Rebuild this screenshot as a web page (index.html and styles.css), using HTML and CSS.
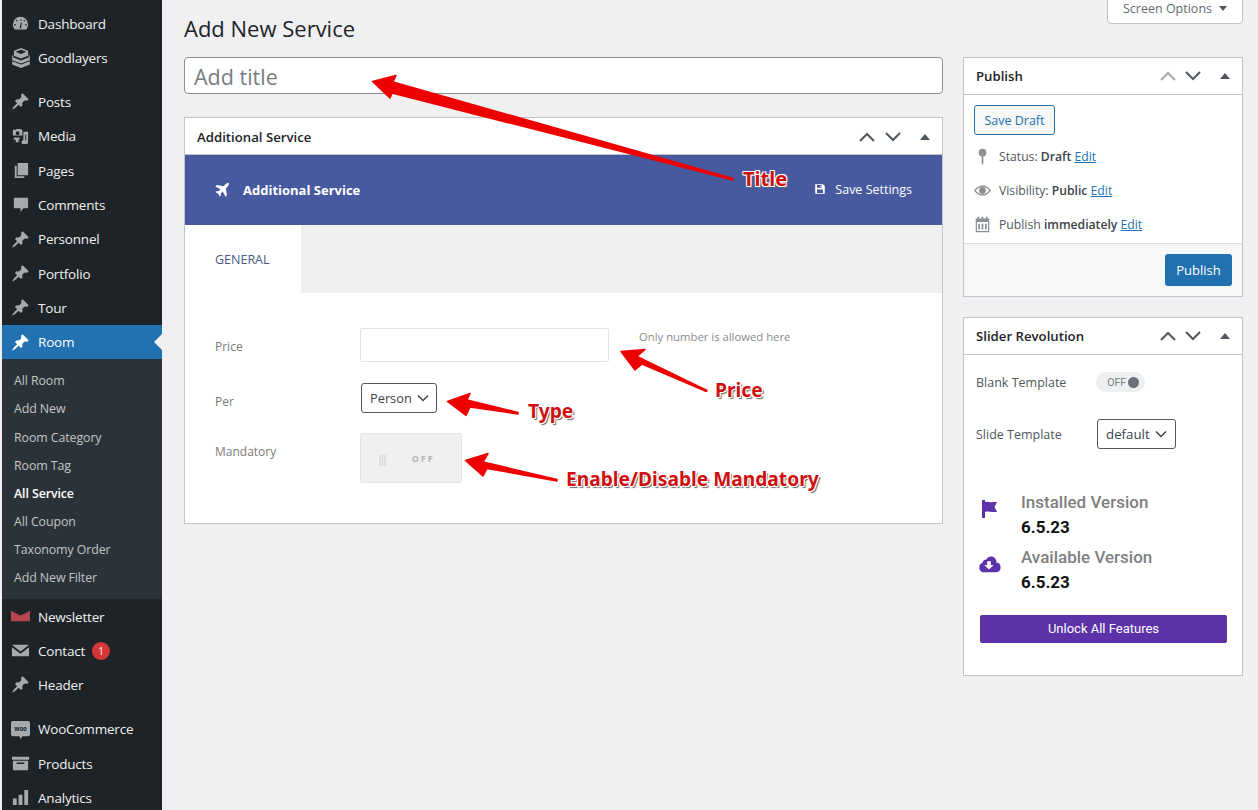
FILE: index.html
```html
<!DOCTYPE html>
<html lang="en">
<head>
    <meta charset="UTF-8">
    <title>Add New Service</title>
    <link rel="stylesheet" href="styles.css">
</head>
<body>
    <div id="geral">
        <nav class="sidebar">
            <ul class="menu menu-first">
                <li><svg class="mi" viewBox="0 0 20 20"><path d="M10 3a8 8 0 0 0-8 8c0 2 .7 3.8 2 5.2h12c1.3-1.400 2-3.200 2-5.200a8 8 0 0 0-8-8zm-5 9H3.500v-1.500H5zm1-4L5 7l1-1 1 1zm4-2.500h1V7h-1zM9 15l1.500-6 1 .2L10.500 15zm6-3v-1.500h1.500V12zm-1-4l-1-1 1-1 1 1z"/></svg>Dashboard</li>
                <li><svg class="mi big" viewBox="0 0 20 20"><path d="M10 1l6.500 2.500V8L10 10.500 3.500 8V3.500zM5 4.300l5 2 5-2-5-1.800zM2 7.500l1 .5v1.500l7 2.700 7-2.700V8l1-.5V12l-8 3-8-3zM2 13l8 3 8-3v3l-8 3-8-3z"/></svg>Goodlayers</li>
            </ul>
            <ul class="menu">
                <li><svg class="mi" viewBox="0 0 20 20"><use href="#pin"/></svg>Posts</li>
                <li><svg class="mi" viewBox="0 0 20 20"><path d="M2 3h3l1-1h4l1 1h1v6H2zm5 1.500a2 2 0 1 0 0 4 2 2 0 0 0 0-4zM13 5h5v11a2 2 0 1 1-2-2V8h-1v8a2 2 0 0 1-4 0 2 2 0 0 1 2-2zM3 11h6v2.500H8V16H5v-2.500H3z"/></svg>Media</li>
                <li><svg class="mi" viewBox="0 0 20 20"><path d="M7 2h11v13H7zM4 5h2v11h8v2H4z"/></svg>Pages</li>
                <li><svg class="mi" viewBox="0 0 20 20"><path d="M4 3h13a1 1 0 0 1 1 1v9a1 1 0 0 1-1 1h-4l-3 4v-4H4a1 1 0 0 1-1-1V4a1 1 0 0 1 1-1z"/></svg>Comments</li>
                <li><svg class="mi" viewBox="0 0 20 20"><use href="#pin"/></svg>Personnel</li>
                <li><svg class="mi" viewBox="0 0 20 20"><use href="#pin"/></svg>Portfolio</li>
                <li><svg class="mi" viewBox="0 0 20 20"><use href="#pin"/></svg>Tour</li>
                <li class="current"><svg class="mi" viewBox="0 0 20 20"><use href="#pin"/></svg>Room</li>
            </ul>
            <ul class="submenu">
                <li>All Room</li>
                <li>Add New</li>
                <li>Room Category</li>
                <li>Room Tag</li>
                <li class="sub-current">All Service</li>
                <li>All Coupon</li>
                <li>Taxonomy Order</li>
                <li>Add New Filter</li>
            </ul>
            <ul class="menu">
                <li><svg class="mi" viewBox="0 0 20 20"><path class="red" d="M0 4l10 5 10-5v11H0z"/></svg>Newsletter</li>
                <li><svg class="mi" viewBox="0 0 20 20"><path d="M1 4h18L10 11zM1 6.500l9 7 9-7V16H1z"/></svg>Contact<span class="badge">1</span></li>
                <li><svg class="mi" viewBox="0 0 20 20"><use href="#pin"/></svg>Header</li>
            </ul>
            <ul class="menu menu-sep">
                <li><svg class="mi" viewBox="0 0 20 20"><path d="M2 1h16a2 2 0 0 1 2 2v12a2 2 0 0 1-2 2h-6l-2 3-1-3H2a2 2 0 0 1-2-2V3a2 2 0 0 1 2-2z"/><text class="woo" x="10" y="11.500" text-anchor="middle">woo</text></svg>WooCommerce</li>
                <li><svg class="mi" viewBox="0 0 20 20"><path d="M1 3h18v3H1zM2 7h16v10H2zm4 2v1.500h8V9z"/></svg>Products</li>
                <li><svg class="mi" viewBox="0 0 20 20"><path d="M2 11h4v7H2zM8 7h4v11H8zM14 2h4v16h-4z"/></svg>Analytics</li>
            </ul>
        </nav>

        <main class="conteudo">
            <div class="screen-options">Screen Options<i class="seta"></i></div>
            <h1>Add New Service</h1>
            <div class="colunas">
                <div class="principal">
                    <div class="titulo">Add title</div>

                    <section class="box">
                        <header class="box-top">
                            <h2>Additional Service</h2>
                            <div class="box-ctrl">
                                <svg viewBox="0 0 20 20"><path d="M3 14l7-7 7 7"/></svg>
                                <svg viewBox="0 0 20 20"><path d="M3 6l7 7 7-7"/></svg>
                                <i class="tri"></i>
                            </div>
                        </header>
                        <div class="banner">
                            <div class="banner-nome">
                                <svg viewBox="0 0 20 20"><path transform="rotate(45 10 10)" d="M10 0c1.500 0 2 2 2 4v3l7 5v2.500l-7-2V16l2 2v1.500l-4-1-4 1V18l2-2v-3.500l-7 2V12l7-5V4c0-2 .5-4 2-4z"/></svg>
                                Additional Service
                            </div>
                            <div class="banner-salvar">
                                <svg viewBox="0 0 20 20"><path d="M2 2h13l3 3v13H2zm3 1.500V8h8V3.500zm6 .7h1.500v3H11zM5 11v5.500h10V11z"/></svg>
                                Save Settings
                            </div>
                        </div>
                        <div class="abas">
                            <div class="aba">GENERAL</div>
                        </div>
                        <div class="campos">
                            <div class="linha linha-preco">
                                <label>Price</label>
                                <div class="campo-texto"></div>
                                <span class="dica">Only number is allowed here</span>
                            </div>
                            <div class="linha linha-per">
                                <label>Per</label>
                                <div class="selecao">Person <svg viewBox="0 0 12 8"><path d="M1 1.500l5 5 5-5"/></svg></div>
                            </div>
                            <div class="linha linha-mand">
                                <label>Mandatory</label>
                                <div class="chave"><span class="barras">|||</span><span>OFF</span></div>
                            </div>
                        </div>
                    </section>
                </div>

                <aside class="lateral">
                    <section class="box">
                        <header class="box-top box-top-lat">
                            <h2>Publish</h2>
                            <div class="box-ctrl">
                                <svg class="fraco" viewBox="0 0 20 20"><path d="M3 14l7-7 7 7"/></svg>
                                <svg viewBox="0 0 20 20"><path d="M3 6l7 7 7-7"/></svg>
                                <i class="tri"></i>
                            </div>
                        </header>
                        <div class="pub-corpo">
                            <div class="btn-rascunho">Save Draft</div>
                            <div class="pub-linha">
                                <svg viewBox="0 0 20 20"><path d="M10 1a4.500 4.500 0 0 0-1 8.900V18l1 2 1-2V9.900A4.500 4.500 0 0 0 10 1z"/></svg>
                                <span>Status: <b>Draft</b> <a>Edit</a></span>
                            </div>
                            <div class="pub-linha">
                                <svg viewBox="0 0 20 20"><path d="M10 4c4.500 0 8 3 10 6-2 3-5.500 6-10 6S2 13 0 10c2-3 5.500-6 10-6zm0 1.500C7 5.500 4 7.500 2 10c2 2.500 5 4.500 8 4.500s6-2 8-4.500c-2-2.500-5-4.500-8-4.500zM10 6a4 4 0 1 1 0 8 4 4 0 0 1 0-8z"/></svg>
                                <span>Visibility: <b>Public</b> <a>Edit</a></span>
                            </div>
                            <div class="pub-linha">
                                <svg viewBox="0 0 20 20"><path d="M4 1h2v2h3V1h2v2h3V1h2v2h2v16H2V3h2zM3.500 7v10.500h13V7zM5 9h2v7H5zm4 0h2v7H9zm4 0h2v7h-2z"/></svg>
                                <span>Publish <b>immediately</b> <a>Edit</a></span>
                            </div>
                        </div>
                        <div class="pub-rodape"><div class="btn-publicar">Publish</div></div>
                    </section>

                    <section class="box box-slider">
                        <header class="box-top box-top-lat">
                            <h2>Slider Revolution</h2>
                            <div class="box-ctrl">
                                <svg viewBox="0 0 20 20"><path d="M3 14l7-7 7 7"/></svg>
                                <svg viewBox="0 0 20 20"><path d="M3 6l7 7 7-7"/></svg>
                                <i class="tri"></i>
                            </div>
                        </header>
                        <div class="sr-corpo">
                            <div class="sr-linha sr-blank">
                                <span class="sr-rotulo">Blank Template</span>
                                <div class="sr-toggle">OFF<i></i></div>
                            </div>
                            <div class="sr-linha sr-slide">
                                <span class="sr-rotulo">Slide Template</span>
                                <div class="selecao sr-select">default <svg viewBox="0 0 12 8"><path d="M1 1.500l5 5 5-5"/></svg></div>
                            </div>
                            <div class="versao versao-primeira">
                                <svg class="flag" viewBox="0 0 20 20"><path d="M3 1h3v2c3-1 5 1 8 0h4l-2.500 5 2.500 5h-5c-2 0-4-1-7 0v6H3z"/></svg>
                                <div><p class="v-nome">Installed Version</p><p class="v-num">6.5.23</p></div>
                            </div>
                            <div class="versao">
                                <svg class="nuvem" viewBox="0 0 26 20"><path d="M21 8.500A5.500 5.500 0 0 0 15.500 2a6 6 0 0 0-5.500 3.300A3.500 3.500 0 0 0 6 8.700 5.500 5.500 0 0 0 6 19h15a5.300 5.300 0 0 0 0-10.500zM13 16l-5-5h3V7h4v4h3z"/></svg>
                                <div><p class="v-nome">Available Version</p><p class="v-num">6.5.23</p></div>
                            </div>
                            <div class="btn-unlock">Unlock All Features</div>
                        </div>
                    </section>
                </aside>
            </div>
        </main>
    </div>

    <!-- setas vermelhas por cima do print -->
    <svg class="setas" width="1258" height="810" viewBox="0 0 1258 810">
        <defs>
            <path id="pin" d="M10.440 3.020l1.820-1.820 6.360 6.350-1.830 1.820c-1.050-.68-2.480-.57-3.410.36l-.75.75c-.92.93-1.040 2.350-.35 3.400l-1.830 1.820-2.410-2.410-2.800 2.790c-.42.42-3.380 2.710-3.800 2.290s1.860-3.390 2.280-3.810l2.790-2.790L4.100 9.360l1.830-1.820c1.050.69 2.480.57 3.400-.36l.75-.75c.93-.92 1.050-2.350.37-3.410z"/>
        </defs>
        <g class="seta-verm">
            <path d="M372.500 81.500L396 75.500L393 82L733 178.500L733 180L392 93L390 98Z"/>
            <path d="M621 351.500L645 349.500L637 356.500L707 390.500L706.500 391.500L642 364L635 370Z"/>
            <path d="M447.500 401.500L470 393.500L467 400L518 412.500L518 414L470 407L466 415.500Z"/>
            <path d="M465.500 460.500L488 453.500L483 462L557 479.500L557 481L487 468.500L483 476Z"/>
        </g>
    </svg>
    <span class="nota nota-titulo">Title</span>
    <span class="nota nota-preco">Price</span>
    <span class="nota nota-tipo">Type</span>
    <span class="nota nota-mand">Enable/Disable Mandatory</span>
</body>
</html>
```

FILE: styles.css
```css
/* base */
body {
    margin: 0;
    background-color: #f0f0f3;
    font-family: "Open Sans", "Noto Sans", sans-serif;
    font-size: 13px;
    color: #3c434a;
    height: 810px;
    overflow: hidden;
    position: relative;
}

h1, h2, p, ul {
    margin: 0;
    padding: 0;
}

#geral {
    display: flex;
    height: 810px;
    padding-left: 2px;
}

/* menu lateral */
.sidebar {
    width: 160px;
    flex: none;
    background-color: #1d2327;
    color: #f0f0f1;
    padding-top: 6.400px;
}

.menu {
    list-style-type: none;
    margin-bottom: 10px;
}

.menu li {
    height: 34.3px;
    display: flex;
    align-items: center;
    padding-left: 36px;
    position: relative;
    font-size: 13.500px;
    letter-spacing: -0.2px;
}

.mi {
    position: absolute;
    left: 9px;
    top: 7.500px;
    width: 19px;
    height: 19px;
    fill: #a7aaad;
}

.mi.big {
    left: 8px;
    top: 6px;
    width: 22px;
    height: 22px;
}

.mi .red {
    fill: #b5444f;
}

.woo {
    font-size: 6.500px;
    font-weight: 700;
    fill: #1d2327;
}

.menu li.current {
    background-color: #2271b1;
    color: #fff;
}

.current .mi {
    fill: #fff;
}

.current::after {
    content: "";
    position: absolute;
    right: 0;
    top: 9px;
    border: 8px solid transparent;
    border-right-color: #f0f0f3;
    border-left-width: 0;
}

.menu:has(.current) {
    margin-bottom: 0;
}

.submenu {
    list-style-type: none;
    background-color: #2c3338;
    padding: 8px 0 7px;
    color: #c3c4c7;
    font-size: 12.400px;
    letter-spacing: -0.1px;
}

.submenu li {
    height: 28.140px;
    line-height: 28px;
    padding-left: 12px;
}

.submenu .sub-current {
    color: #fff;
    font-weight: 600;
}

.badge {
    display: inline-block;
    width: 18px;
    height: 18px;
    line-height: 18px;
    border-radius: 50%;
    background-color: #d63638;
    color: #fff;
    text-align: center;
    font-size: 10px;
    margin-left: 7px;
    letter-spacing: 0;
}

/* conteudo */
.conteudo {
    flex: 1;
    padding: 0 15px 0 22px;
    position: relative;
}

.screen-options {
    position: absolute;
    top: -1px;
    right: 15px;
    width: 134px;
    height: 23px;
    line-height: 18px;
    text-align: center;
    background-color: #fff;
    border: 1px solid #c3c4c7;
    border-radius: 0 0 4px 4px;
    color: #646970;
    font-size: 12.500px;
}

.seta {
    display: inline-block;
    width: 0;
    height: 0;
    margin-left: 7px;
    border: 4px solid transparent;
    border-bottom-width: 0;
    border-top: 5px solid #50575e;
    vertical-align: 2px;
}

h1 {
    font-size: 22px;
    font-weight: 400;
    line-height: 30px;
    color: #1d2327;
    padding-top: 13px;
    margin-bottom: 14px;
}

.colunas {
    display: flex;
    gap: 20px;
    align-items: flex-start;
}

.principal {
    width: 759px;
    flex: none;
}

.lateral {
    width: 280px;
    flex: none;
}

.titulo {
    height: 35px;
    line-height: 38px;
    padding: 0 9px;
    background-color: #fff;
    border: 1px solid #8c8f94;
    border-radius: 4px;
    font-size: 21.500px;
    color: #787c82;
    margin-bottom: 23px;
}

.box {
    background-color: #fff;
    border: 1px solid #c3c4c7;
}

.box-top {
    height: 36px;
    display: flex;
    align-items: center;
    justify-content: space-between;
    border-bottom: 1px solid #c3c4c7;
    padding: 0 12px;
}

.principal .box-top {
    height: 35px;
    padding-top: 1px;
}

.box-top h2 {
    font-size: 13.200px;
    font-weight: 600;
    color: #1d2327;
}

.box-ctrl {
    display: flex;
    align-items: center;
    gap: 5px;
}

.principal .box-ctrl {
    gap: 6px;
}

.box-ctrl svg {
    width: 20px;
    height: 20px;
    fill: none;
    stroke: #50575e;
    stroke-width: 2;
}

.box-ctrl svg.fraco {
    stroke: #a7aaad;
}

.tri {
    width: 0;
    height: 0;
    margin-left: 12px;
    border: 5px solid transparent;
    border-top-width: 0;
    border-bottom: 6px solid #50575e;
}

.principal .tri {
    margin-left: 11px;
}

/* banner azul */
.banner {
    height: 70px;
    background-color: #485a9f;
    color: #fff;
    display: flex;
    align-items: center;
    justify-content: space-between;
    padding: 0 30px;
}

.banner-nome {
    display: flex;
    align-items: center;
    gap: 12px;
    font-weight: 700;
    font-size: 13px;
}

.banner-nome svg {
    width: 16px;
    height: 16px;
    fill: #fff;
    margin-top: -3px;
}

.banner-salvar {
    display: flex;
    align-items: center;
    gap: 9px;
    font-size: 12.500px;
    margin-top: -2px;
}

.banner-salvar svg {
    width: 12px;
    height: 12px;
    fill: #fff;
}

.abas {
    height: 68px;
    background-color: #f0f0f1;
}

.aba {
    width: 86px;
    height: 68px;
    background-color: #fff;
    line-height: 70px;
    padding-left: 30px;
    color: #485a84;
    font-size: 12.500px;
    font-weight: 500;
}

.campos {
    padding: 35px 30px 40px;
}

.linha {
    display: flex;
    align-items: center;
    color: #7a7a7a;
    font-size: 12px;
}

.linha label {
    width: 145px;
    flex: none;
}

.linha-preco {
    height: 34px;
    margin-bottom: 21px;
}

.linha-preco label {
    padding-top: 2px;
}

.linha-per {
    height: 30px;
    margin-bottom: 20px;
}

.linha-per label {
    padding-top: 6px;
}

.linha-mand {
    align-items: flex-start;
}

.linha-mand label {
    padding-top: 10px;
}

.campo-texto {
    width: 247px;
    height: 32px;
    border: 1px solid #e3e3e3;
    border-radius: 2px;
}

.dica {
    font-size: 11.300px;
    color: #8a8a8a;
    margin-left: 30px;
    padding-top: 1px;
    align-self: flex-start;
}

.selecao {
    display: inline-flex;
    align-items: center;
    gap: 5px;
    height: 28px;
    padding: 0 7px 0 8px;
    margin-left: 1px;
    border: 1px solid #50575e;
    border-radius: 3px;
    font-size: 12.800px;
    color: #3c434a;
    background-color: #fff;
}

.selecao svg {
    width: 12px;
    height: 8px;
    fill: none;
    stroke: #3c434a;
    stroke-width: 1.500;
}

.chave {
    width: 100px;
    height: 48px;
    background-color: #f0f0f0;
    border: 1px solid #e4e4e4;
    border-radius: 2px;
    display: flex;
    align-items: center;
    color: #b5b5b5;
    font-size: 9px;
    font-weight: 700;
    letter-spacing: 2px;
}

.barras {
    font-weight: 400;
    font-size: 11px;
    margin: 0 27px 0 16px;
    letter-spacing: -3.500px;
    color: #c8c8c8;
}

/* publish */
.pub-corpo {
    padding: 10px 10px 2px;
}

.btn-rascunho {
    width: 79px;
    height: 28px;
    line-height: 29px;
    text-align: center;
    border: 1px solid #2271b1;
    border-radius: 3px;
    background-color: #f6f7f7;
    color: #2271b1;
    font-size: 12.500px;
    margin-bottom: 4px;
}

.pub-linha {
    display: flex;
    align-items: center;
    gap: 8px;
    height: 34px;
    font-size: 12.200px;
    color: #50575e;
}

.pub-linha svg {
    width: 17px;
    height: 17px;
    fill: #8c8f94;
    flex: none;
}

.pub-linha b {
    font-weight: 600;
    color: #3c434a;
}

.pub-linha a {
    color: #2271b1;
    text-decoration: underline;
}

.pub-rodape {
    background-color: #f6f7f7;
    border-top: 1px solid #dcdcde;
    padding: 10px;
    display: flex;
    justify-content: flex-end;
}

.btn-publicar {
    width: 67px;
    height: 32px;
    line-height: 32px;
    text-align: center;
    background-color: #2271b1;
    border-radius: 3px;
    color: #fff;
    font-size: 13px;
}

/* slider revolution */
.box-slider {
    margin-top: 20px;
}

.sr-corpo {
    padding: 0 15px 0 12px;
    height: 320px;
    font-family: Roboto, sans-serif;
}

.sr-linha {
    display: flex;
    align-items: center;
}

.sr-rotulo {
    width: 120px;
    font-family: "Open Sans", sans-serif;
    font-size: 12.500px;
    color: #50575e;
}

.sr-blank {
    height: 20px;
    padding-top: 17px;
}

.sr-toggle {
    width: 49px;
    height: 20px;
    border-radius: 10px;
    background-color: #eeeff1;
    display: flex;
    align-items: center;
    justify-content: flex-end;
    gap: 2px;
    padding-right: 6px;
    box-sizing: border-box;
    font-size: 10.500px;
    color: #7a7f85;
}

.sr-toggle i {
    width: 11px;
    height: 11px;
    border-radius: 50%;
    background-color: #6c7177;
}

.sr-slide {
    margin-top: 27px;
}

.sr-select {
    height: 28px;
    padding: 0 8px 0 8px;
    font-size: 13.300px;
    font-family: "Open Sans", sans-serif;
}

.versao {
    display: flex;
    align-items: flex-start;
    height: 55px;
}

.versao-primeira {
    margin-top: 41px;
}

.versao svg {
    width: 24px;
    height: 20px;
    fill: #5b32a8;
    margin: 9px 20px 0 1px;
    flex: none;
}

.v-nome {
    font-size: 17px;
    font-weight: 500;
    color: #7f7f7f;
    line-height: 25px;
}

.v-num {
    font-size: 17px;
    font-weight: 700;
    color: #111;
    line-height: 25px;
}

.btn-unlock {
    margin: 15px 0 0 4px;
    width: 247px;
    height: 28px;
    line-height: 28px;
    text-align: center;
    background-color: #5b32a8;
    color: #fff;
    border-radius: 2px;
    font-size: 13px;
    font-weight: 400;
}

/* anotacoes */
.setas {
    position: absolute;
    left: 0;
    top: 0;
}

.seta-verm path {
    fill: #ee0000;
    stroke: #ee0000;
    stroke-width: 1.500;
    stroke-linejoin: round;
}

.nota {
    position: absolute;
    font-family: "Noto Sans", sans-serif;
    font-weight: 700;
    font-size: 19.200px;
    line-height: 24px;
    color: #cf1010;
    text-shadow: 1px 1px 0 #fff, -1px -1px 0 #fff, 1px -1px 0 #fff, -1px 1px 0 #fff, 2px 2px 1px #666;
    white-space: nowrap;
}

.nota-titulo { left: 743px; top: 167px; font-size: 20px; }
.nota-preco { left: 715px; top: 378px; }
.nota-tipo { left: 528px; top: 399px; }
.nota-mand { left: 566px; top: 467px; }
```
